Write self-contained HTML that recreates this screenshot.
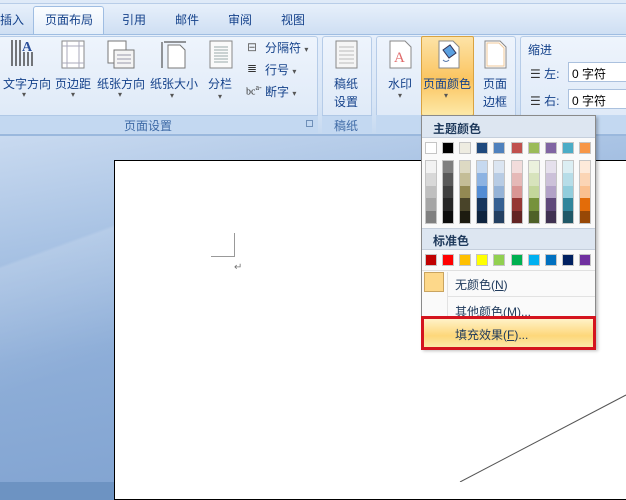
<!DOCTYPE html>
<html><head><meta charset="utf-8"><style>
*{margin:0;padding:0;box-sizing:border-box}
body{width:626px;height:482px;overflow:hidden;position:relative;font-family:"Liberation Sans","Noto Sans CJK SC",sans-serif;font-size:12px;color:#15428b;background:#6d93c2}
.a{position:absolute}
.t{position:absolute;white-space:nowrap;font-size:12px;color:#15428b}
.sw{position:absolute;width:11px;height:11px;border:1px solid #c5c5c5}
</style></head><body>
<div class="a" style="left:0;top:136px;width:626px;height:346px;background:linear-gradient(170deg,#c9daf0 0%,#a9c3e4 25%,#8eaed8 50%,#7c9fce 100%)"></div>
<div class="a" style="left:0;top:200px;width:130px;height:282px;background:linear-gradient(160deg,rgba(255,255,255,0) 20%,rgba(255,255,255,.15) 21%,rgba(255,255,255,0) 60%)"></div>
<div class="a" style="left:0;top:0;width:626px;height:34px;background:linear-gradient(#eaf2fc,#cfdff3)"></div>
<div class="a" style="left:0;top:0;width:626px;height:4px;background:#dfeaf8;border-bottom:1px solid #b8cde8"></div>
<div class="a" style="left:33px;top:6px;width:71px;height:29px;background:linear-gradient(#fbfdff,#e4eefa);border:1px solid #9fbde2;border-bottom:none;border-radius:3px 3px 0 0"></div>
<div class="t" style="left:0;top:11px">插入</div>
<div class="t" style="left:45px;top:11px">页面布局</div>
<div class="t" style="left:122px;top:11px">引用</div>
<div class="t" style="left:175px;top:11px">邮件</div>
<div class="t" style="left:228px;top:11px">审阅</div>
<div class="t" style="left:281px;top:11px">视图</div>
<div class="a" style="left:0;top:34px;width:626px;height:102px;background:linear-gradient(#e6effb,#d7e5f6 70%,#c6d9f0);border-top:1px solid #9fbde2;border-bottom:2px solid #9ab8dd"></div>
<div class="a" style="left:-2px;top:36px;width:320px;height:97px;border:1px solid #b6cce8;border-radius:3px;background:linear-gradient(#eef4fc,#dce8f7)"></div>
<div class="a" style="left:-2px;top:115px;width:320px;height:18px;background:#c3d8f1;border-top:1px solid #b0c8e6"></div>
<div class="t" style="left:124px;top:117px;color:#3e6aa6">页面设置</div>
<div class="a" style="left:306px;top:120px;width:7px;height:7px;border:1px solid #6f8fb8"></div>
<div class="a" style="left:322px;top:36px;width:50px;height:97px;border:1px solid #b6cce8;border-radius:3px;background:linear-gradient(#eef4fc,#dce8f7)"></div>
<div class="a" style="left:322px;top:115px;width:50px;height:18px;background:#c3d8f1;border-top:1px solid #b0c8e6"></div>
<div class="t" style="left:334px;top:117px;color:#3e6aa6">稿纸</div>
<div class="a" style="left:376px;top:36px;width:140px;height:97px;border:1px solid #b6cce8;border-radius:3px;background:linear-gradient(#eef4fc,#dce8f7)"></div>
<div class="a" style="left:376px;top:115px;width:140px;height:18px;background:#c3d8f1"></div>
<div class="a" style="left:520px;top:36px;width:110px;height:97px;border:1px solid #b6cce8;border-radius:3px;background:linear-gradient(#eef4fc,#dce8f7)"></div>
<div class="a" style="left:520px;top:115px;width:110px;height:18px;background:#c3d8f1"></div>
<svg class="a" style="left:8px;top:38px" width="32" height="32"><g stroke="#222" stroke-width="1.2"><line x1="4" y1="2" x2="4" y2="28"/><line x1="8" y1="2" x2="8" y2="28"/><line x1="12" y1="2" x2="12" y2="28"/><line x1="16" y1="14" x2="16" y2="28"/><line x1="20" y1="14" x2="20" y2="28"/><line x1="24" y1="14" x2="24" y2="28"/></g><text x="14" y="13" font-size="14" font-weight="bold" fill="#2a4f9a" font-family="Liberation Serif">A</text></svg>
<svg class="a" style="left:60px;top:40px" width="26" height="30"><rect x="2" y="1" width="22" height="27" fill="#fff" stroke="#888"/><g stroke="#aab" ><line x1="7" y1="1" x2="7" y2="28"/><line x1="19" y1="1" x2="19" y2="28"/><line x1="2" y1="6" x2="24" y2="6"/><line x1="2" y1="23" x2="24" y2="23"/></g></svg>
<svg class="a" style="left:106px;top:40px" width="30" height="30"><rect x="2" y="1" width="18" height="22" fill="#fff" stroke="#777"/><rect x="8" y="10" width="20" height="18" fill="#f4f4f4" stroke="#777"/><g stroke="#99a"><line x1="11" y1="15" x2="25" y2="15"/><line x1="11" y1="19" x2="25" y2="19"/><line x1="11" y1="23" x2="25" y2="23"/></g></svg>
<svg class="a" style="left:160px;top:40px" width="30" height="30"><line x1="2" y1="2" x2="2" y2="28" stroke="#333"/><line x1="4" y1="2" x2="26" y2="2" stroke="#333"/><path d="M8 5h12l5 5v18H8z" fill="#fff" stroke="#777"/></svg>
<svg class="a" style="left:209px;top:40px" width="26" height="30"><rect x="1" y="1" width="22" height="27" fill="#fafafa" stroke="#888"/><g stroke="#9aa"><line x1="5" y1="7" x2="19" y2="7"/><line x1="5" y1="10" x2="19" y2="10"/><line x1="5" y1="13" x2="19" y2="13"/><line x1="5" y1="16" x2="19" y2="16"/><line x1="5" y1="19" x2="19" y2="19"/><line x1="5" y1="22" x2="19" y2="22"/></g></svg>
<div class="t" style="left:3px;top:75px">文字方向</div>
<div class="t" style="left:55px;top:75px">页边距</div>
<div class="t" style="left:97px;top:75px">纸张方向</div>
<div class="t" style="left:150px;top:75px">纸张大小</div>
<div class="t" style="left:208px;top:75px">分栏</div>
<div class="t" style="left:22px;top:90px;font-size:8px;color:#555">▾</div>
<div class="t" style="left:71px;top:90px;font-size:8px;color:#555">▾</div>
<div class="t" style="left:118px;top:90px;font-size:8px;color:#555">▾</div>
<div class="t" style="left:170px;top:91px;font-size:8px;color:#555">▾</div>
<div class="t" style="left:218px;top:92px;font-size:8px;color:#555">▾</div>
<div class="t" style="left:247px;top:40px;color:#666">⊟</div><div class="t" style="left:265px;top:39px">分隔符 <span style="font-size:8px;color:#555">▾</span></div>
<div class="t" style="left:247px;top:61px;color:#333">≣</div><div class="t" style="left:265px;top:61px">行号 <span style="font-size:8px;color:#555">▾</span></div>
<div class="t" style="left:246px;top:83px;font-size:10px;color:#333;font-family:'Liberation Serif'">bc<sup style="font-size:8px">a-</sup></div><div class="t" style="left:265px;top:83px">断字 <span style="font-size:8px;color:#555">▾</span></div>
<svg class="a" style="left:334px;top:40px" width="26" height="30"><rect x="2" y="1" width="21" height="27" fill="#f5f5f5" stroke="#888"/><g stroke="#bbb"><line x1="5" y1="7" x2="20" y2="7"/><line x1="5" y1="11" x2="20" y2="11"/><line x1="5" y1="15" x2="20" y2="15"/><line x1="5" y1="19" x2="20" y2="19"/><line x1="5" y1="23" x2="20" y2="23"/></g></svg>
<div class="t" style="left:334px;top:75px;line-height:18px">稿纸<br>设置</div>
<svg class="a" style="left:388px;top:40px" width="26" height="30"><path d="M2 1h15l6 6v21H2z" fill="#fff" stroke="#888"/><text x="6" y="22" font-size="15" fill="#e06a6a" font-family="Liberation Serif">A</text></svg>
<div class="t" style="left:388px;top:75px">水印</div>
<div class="t" style="left:398px;top:91px;font-size:8px;color:#555">▾</div>
<div class="a" style="left:421px;top:36px;width:53px;height:80px;border:1px solid #d9a341;border-radius:2px;background:linear-gradient(#fde3a7,#fbc45f 55%,#fde9a8)"></div>
<svg class="a" style="left:436px;top:40px" width="26" height="30"><path d="M3 1h14l6 6v21H3z" fill="#fff" stroke="#888"/><path d="M7 10l7-5 6 8-7 5z" fill="#5ba0e0" stroke="#335"/><path d="M7 20q3 3 6 0" stroke="#57a" fill="none"/></svg>
<div class="t" style="left:423px;top:75px">页面颜色</div>
<div class="t" style="left:444px;top:91px;font-size:8px;color:#555">▾</div>
<svg class="a" style="left:483px;top:40px" width="26" height="30"><path d="M2 1h15l6 6v21H2z" fill="#fff" stroke="#888"/><path d="M4 3h12l5 5v18H4z" fill="none" stroke="#f0c89a"/></svg>
<div class="t" style="left:483px;top:75px;line-height:18px">页面<br>边框</div>
<div class="t" style="left:528px;top:41px">缩进</div>
<div class="t" style="left:530px;top:65px;color:#333">☰ <span style="color:#15428b">左:</span></div>
<div class="t" style="left:530px;top:92px;color:#333">☰ <span style="color:#15428b">右:</span></div>
<div class="a" style="left:568px;top:62px;width:60px;height:20px;background:#fff;border:1px solid #abc1de"></div>
<div class="a" style="left:568px;top:89px;width:60px;height:20px;background:#fff;border:1px solid #abc1de"></div>
<div class="t" style="left:572px;top:65px;color:#000">0 字符</div>
<div class="t" style="left:572px;top:92px;color:#000">0 字符</div>
<div class="a" style="left:114px;top:160px;width:520px;height:340px;background:#fff;border:1px solid #000"></div>
<div class="a" style="left:211px;top:233px;width:24px;height:24px;border-right:1px solid #999;border-bottom:1px solid #999"></div>
<div class="t" style="left:234px;top:262px;color:#777;font-size:10px">↵</div>
<svg class="a" style="left:0;top:0" width="626" height="482"><line x1="460" y1="482" x2="626" y2="395" stroke="#555" stroke-width="1"/></svg>
<div class="a" style="left:421px;top:115px;width:175px;height:234px;background:#fafafa;border:1px solid #8a8a8a;box-shadow:2px 2px 3px rgba(0,0,0,.25)"></div>
<div class="a" style="left:422px;top:116px;width:173px;height:22px;background:#dde6f1;border-bottom:1px solid #c5cfdc"></div>
<div class="t" style="left:433px;top:120px;font-weight:bold;color:#1e395b">主题颜色</div>
<div class="a" style="left:422px;top:228px;width:173px;height:22px;background:#dde6f1;border-top:1px solid #c5cfdc;border-bottom:1px solid #c5cfdc"></div>
<div class="t" style="left:433px;top:232px;font-weight:bold;color:#1e395b">标准色</div>
<div id="sw"></div>
<div class="a" style="left:422px;top:270px;width:173px;height:1px;background:#e0e0e0"></div>
<div class="a" style="left:424px;top:272px;width:20px;height:20px;background:#fdd88a;border:1px solid #c9a460"></div>
<div class="a" style="left:447px;top:272px;width:1px;height:75px;background:#e2e2e2"></div>
<div class="a" style="left:447px;top:296px;width:148px;height:1px;background:#e2e2e2"></div>
<div class="t" style="left:455px;top:276px;color:#1e395b">无颜色(<u>N</u>)</div>
<div class="t" style="left:455px;top:303px;color:#1e395b">其他颜色(<u>M</u>)...</div>
<div class="a" style="left:421px;top:316px;width:175px;height:34px;border:3px solid #d4141e"></div>
<div class="a" style="left:424px;top:319px;width:169px;height:28px;background:linear-gradient(#fff2c8,#fdd77a 60%,#fbe9a8)"></div>
<div class="t" style="left:455px;top:326px;color:#1e395b">填充效果(<u>F</u>)...</div>
<script>
var topc=["#ffffff","#000000","#eeece1","#1f497d","#4f81bd","#c0504d","#9bbb59","#8064a2","#4bacc6","#f79646"];
var grad=[["#f2f2f2","#d8d8d8","#bfbfbf","#a5a5a5","#7f7f7f"],["#7f7f7f","#595959","#3f3f3f","#262626","#0c0c0c"],["#ddd9c3","#c4bd97","#938953","#494429","#1d1b10"],["#c6d9f0","#8db3e2","#548dd4","#17365d","#0f243e"],["#dbe5f1","#b8cce4","#95b3d7","#366092","#244061"],["#f2dcdb","#e5b9b7","#d99694","#953734","#632423"],["#ebf1dd","#d7e3bc","#c3d69b","#76923c","#4f6128"],["#e5e0ec","#ccc1d9","#b2a2c7","#5f497a","#3f3151"],["#dbeef3","#b7dde8","#92cddc","#31859b","#205867"],["#fdeada","#fbd5b5","#fac08f","#e36c09","#974806"]];
var std=["#c00000","#ff0000","#ffc000","#ffff00","#92d050","#00b050","#00b0f0","#0070c0","#002060","#7030a0"];
var h="";
for(var i=0;i<10;i++){var x=425+i*17.1;
h+='<div class="sw" style="left:'+x+'px;top:142px;width:12px;height:12px;background:'+topc[i]+'"></div>';
h+='<div class="a" style="left:'+x+'px;top:160px;width:12px;height:64px;border:1px solid #c5c5c5">';
for(var j=0;j<5;j++)h+='<div style="height:12.4px;background:'+grad[i][j]+'"></div>';
h+='</div>';
h+='<div class="sw" style="left:'+x+'px;top:254px;width:12px;height:12px;background:'+std[i]+'"></div>';}
document.getElementById("sw").outerHTML=h;
</script>
</body></html>
